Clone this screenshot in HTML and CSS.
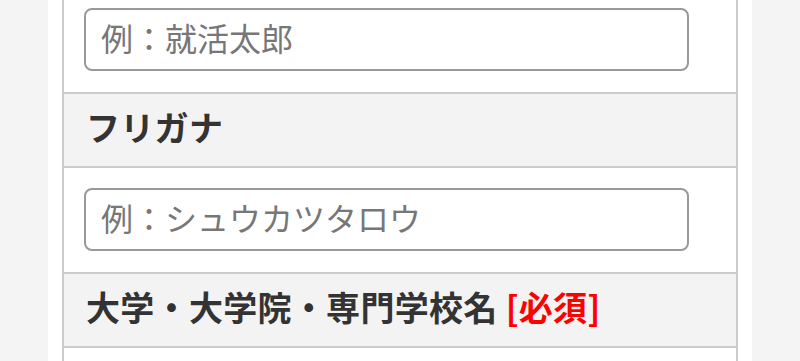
FILE: index.html
```html
<!DOCTYPE html>
<html lang="ja">
<head>
<meta charset="utf-8">
<title>エントリーフォーム</title>
<link rel="stylesheet" href="styles.css">
</head>
<body>
<div class="page">
  <div class="form">
    <div class="field">
      <input class="text-input" type="text" placeholder="例：就活太郎">
    </div>
    <div class="label">フリガナ</div>
    <div class="field">
      <input class="text-input" type="text" placeholder="例：シュウカツタロウ">
    </div>
    <div class="label">大学・大学院・専門学校名 <span class="required">[必須]</span></div>
    <div class="field">
      <input class="text-input" type="text" placeholder="例：就活大学">
    </div>
  </div>
</div>
</body>
</html>
```

FILE: styles.css
```css
html, body {
  margin: 0;
  padding: 0;
  background: #f4f4f4;
}
body {
  font-family: "Noto Sans CJK JP", "Noto Sans", sans-serif;
  color: #333;
}
.page {
  width: 704px;
  margin: 0 auto;
  padding: 0 14px;
  box-sizing: border-box;
  background: #fff;
  min-height: 100vh;
}
.form {
  margin-top: -12px;
  border-left: 2px solid #ccc;
  border-right: 2px solid #ccc;
}
.field {
  padding: 20px 0 21px 20px;
  border-bottom: 2px solid #ccc;
  background: #fff;
}
.text-input {
  display: block;
  box-sizing: border-box;
  width: 605px;
  max-width: 100%;
  height: 63px;
  margin: 0;
  padding: 0 15px 5px;
  border: 2px solid #999;
  border-radius: 8px;
  font-family: "Noto Sans CJK JP", sans-serif;
  font-size: 32px;
  color: #333;
  background: #fff;
  outline: none;
}
.text-input::placeholder {
  color: #777;
}
.label {
  box-sizing: border-box;
  height: 74px;
  padding: 8px 0 0 22px;
  background: #f3f3f3;
  border-bottom: 2px solid #ccc;
  font-size: 34px;
  font-weight: bold;
  line-height: 49px;
  letter-spacing: 0.3px;
  color: #333;
}
.required {
  color: #f00;
}
```
